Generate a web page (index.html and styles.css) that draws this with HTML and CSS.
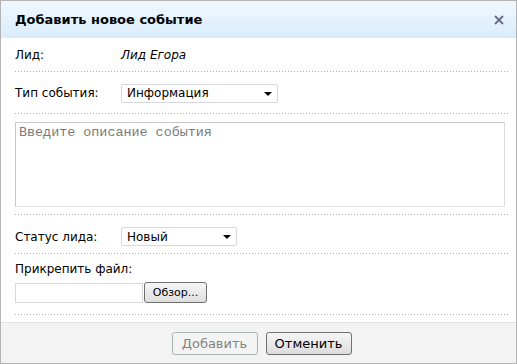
FILE: index.html
```html
<!DOCTYPE html>
<html lang="ru">
<head>
<meta charset="utf-8">
<link rel="stylesheet" href="styles.css">
</head>
<body>
<div class="dialog">
  <div class="header">
    <div class="title">Добавить новое событие</div>
    <div class="close">
      <svg width="10" height="10" viewBox="0 0 10 10"><path d="M1 1 L9 9 M9 1 L1 9" stroke="#6b6f88" stroke-width="2"/></svg>
    </div>
  </div>
  <div class="body">
    <div class="row row-lead">
      <div class="label">Лид:</div>
      <div class="value">Лид Егора</div>
    </div>
    <div class="row row-type">
      <div class="label">Тип события:</div>
      <div class="select select-type"><span>Информация</span><i class="arrow"></i></div>
    </div>
    <div class="row row-text">
      <div class="textarea">Введите описание события</div>
    </div>
    <div class="row row-status">
      <div class="label">Статус лида:</div>
      <div class="select select-status"><span>Новый</span><i class="arrow"></i></div>
    </div>
    <div class="row row-file">
      <div class="label">Прикрепить файл:</div>
      <div class="file">
        <div class="file-input"></div>
        <div class="btn-browse">Обзор...</div>
      </div>
    </div>
  </div>
  <div class="footer">
    <div class="btn btn-disabled">Добавить</div>
    <div class="btn">Отменить</div>
  </div>
</div>
</body>
</html>
```
FILE: styles.css
```css
html, body { margin: 0; padding: 0; background: #fff; }
body { font-family: "DejaVu Sans", sans-serif; font-size: 12px; color: #000; }
.dialog { width: 515px; height: 362px; border: 1px solid #b4b4b4; border-right-width: 2px; display: flex; flex-direction: column; box-sizing: content-box; }
.header { height: 37px; background: linear-gradient(#eff8ff, #daecfc); display: flex; align-items: center; justify-content: space-between; padding: 0 12px 0 14px; }
.title { font-weight: bold; font-size: 13px; }
.close { display: flex; }
.body { flex: 1; padding: 0 8px 0 14px; display: flex; flex-direction: column; }
.row { display: flex; align-items: center; box-sizing: border-box; background: repeating-linear-gradient(to right, #a9aec6 0 1px, transparent 1px 3px) left bottom / 100% 1px no-repeat; }
.row-lead { height: 34px; }
.row-type { height: 42px; }
.row-text { height: 101px; align-items: flex-start; padding-top: 8px; }
.row-status { height: 39px; padding-top: 4px; }
.row-file { height: 61px; flex-direction: column; align-items: flex-start; }
.label { width: 106px; }
.value { font-style: italic; }
.select { position: relative; height: 19px; border: 1px solid #d5d8e0; border-radius: 2px; box-sizing: border-box; display: flex; align-items: center; padding-left: 5px; font-size: 12px; }
.select-type { width: 157px; }
.select-status { width: 116px; }
.arrow { position: absolute; right: 5px; top: 7px; width: 0; height: 0; border-left: 4px solid transparent; border-right: 4px solid transparent; border-top: 4px solid #000; }
.textarea { width: 490px; height: 85px; border: 1px solid #c8c8c8; border-right-color: #dcdcdc; border-bottom-color: #e4e4e4; box-sizing: border-box; font-family: "Liberation Mono", monospace; font-size: 13.4px; color: #7a7a7a; padding: 2px 3px; }
.row-file .label { width: auto; padding-top: 8px; }
.file { display: flex; align-items: center; margin-top: 6px; }
.file-input { width: 128px; height: 20px; border: 1px solid #d8d8d8; box-sizing: border-box; }
.btn-browse { width: 63px; height: 21px; margin-left: 1px; border: 1px solid #707070; border-radius: 3px; background: linear-gradient(#f6f6f6, #dedede); box-sizing: border-box; display: flex; align-items: center; justify-content: center; font-size: 11px; }
.footer { height: 40px; background: #f3f3f3; border-top: 1px solid #e2e2e2; display: flex; justify-content: center; align-items: center; gap: 8px; padding-left: 6px; }
.btn { width: 86px; height: 23px; border: 1px solid #707070; border-radius: 3px; background: linear-gradient(#f6f6f6, #dcdcdc); box-sizing: border-box; display: flex; align-items: center; justify-content: center; font-size: 13px; }
.btn-disabled { border-color: #adb2b5; background: #f4f4f4; color: #838383; }
```
